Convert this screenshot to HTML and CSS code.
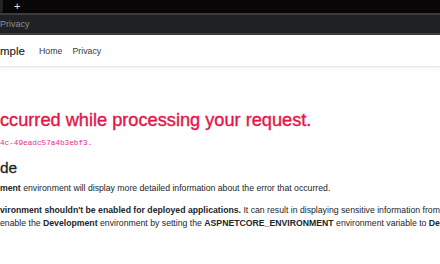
FILE: index.html
```html
<!DOCTYPE html>
<html lang="en">
<head>
  <meta charset="UTF-8" />
  <meta name="viewport" content="width=device-width, initial-scale=1.0" />
  <title>Error - Privacy</title>
  <link rel="stylesheet" href="styles.css">
</head>
<body>

  <div class="browser">
    <div class="tabs">
      <span class="tab-edge"></span>
      <span class="new-tab">+</span>
    </div>
    <div class="toolbar">Privacy</div>
  </div>

  <header class="navbar">
    <a class="brand" href="#">mple</a>
    <nav class="nav">
      <a href="#">Home</a>
      <a href="#">Privacy</a>
    </nav>
  </header>

  <main class="content">
    <h2 class="danger">ccurred while processing your request.</h2>
    <p class="req"><code>4c-49eadc57a4b3ebf3.</code></p>

    <h3>de</h3>
    <p><strong>ment</strong> environment will display more detailed information about the error that occurred.</p>
    <p>
      <span class="line"><strong>vironment shouldn't be enabled for deployed applications.</strong> It can result in displaying sensitive information from exceptions to end users.</span>
      <span class="line">enable the <strong>Development</strong> environment by setting the <strong>ASPNETCORE_ENVIRONMENT</strong> environment variable to <strong>Development</strong> and restarting the app.</span>
    </p>
  </main>

</body>
</html>
```

FILE: styles.css
```css
* {
  box-sizing: border-box;
}

html, body {
  margin: 0;
  padding: 0;
  width: 440px;
  height: 264px;
  overflow: hidden;
  background: #fff;
  font-family: "Liberation Sans", Arial, sans-serif;
  color: #212529;
}

/* browser frame */
.browser {
  background: #090606;
}

.tabs {
  height: 13px;
  display: flex;
  align-items: center;
}

.tab-edge {
  width: 3px;
  height: 13px;
  background: #232427;
  border-bottom-right-radius: 3px;
}

.new-tab {
  margin-left: 11px;
  color: #e8e8e8;
  font-size: 11px;
  line-height: 1;
  margin-top: -1px;
}

.toolbar {
  height: 22px;
  background: #202124;
  border-top: 2px solid #3b3c3e;
  border-bottom: 2px solid #3b3c3e;
  color: #8d8e91;
  font-size: 9px;
  line-height: 18px;
  white-space: nowrap;
}

/* site navbar */
.navbar {
  height: 32px;
  display: flex;
  align-items: center;
  gap: 14px;
  border-bottom: 1px solid #e6e6e6;
  box-shadow: 0 2px 4px rgba(0, 0, 0, 0.05);
  white-space: nowrap;
}

.brand {
  color: #1f1f1f;
  font-size: 11.5px;
  text-decoration: none;
  -webkit-text-stroke: 0.15px #1f1f1f;
}

.nav {
  display: flex;
  gap: 10px;
}

.nav a {
  color: #3a3a3a;
  font-size: 8.8px;
  text-decoration: none;
}

/* error content */
.content {
  padding-top: 43px;
  white-space: nowrap;
}

h2, h3 {
  margin: 0 0 4.4px;
  font-weight: 500;
  line-height: 1.2;
}

.danger {
  color: #e4174b;
  font-size: 18.2px;
  -webkit-text-stroke: 0.4px #e4174b;
}

h3 {
  font-size: 15.4px;
  -webkit-text-stroke: 0.3px #212529;
}

p {
  margin: 0 0 9px;
  font-size: 8.7px;
  line-height: 13.2px;
}

.req {
  margin-bottom: 8.5px;
}

code {
  color: #de2f86;
  font-family: "Liberation Mono", monospace;
  font-size: 7.7px;
}

strong {
  font-weight: bold;
}

.line {
  display: block;
}
```
